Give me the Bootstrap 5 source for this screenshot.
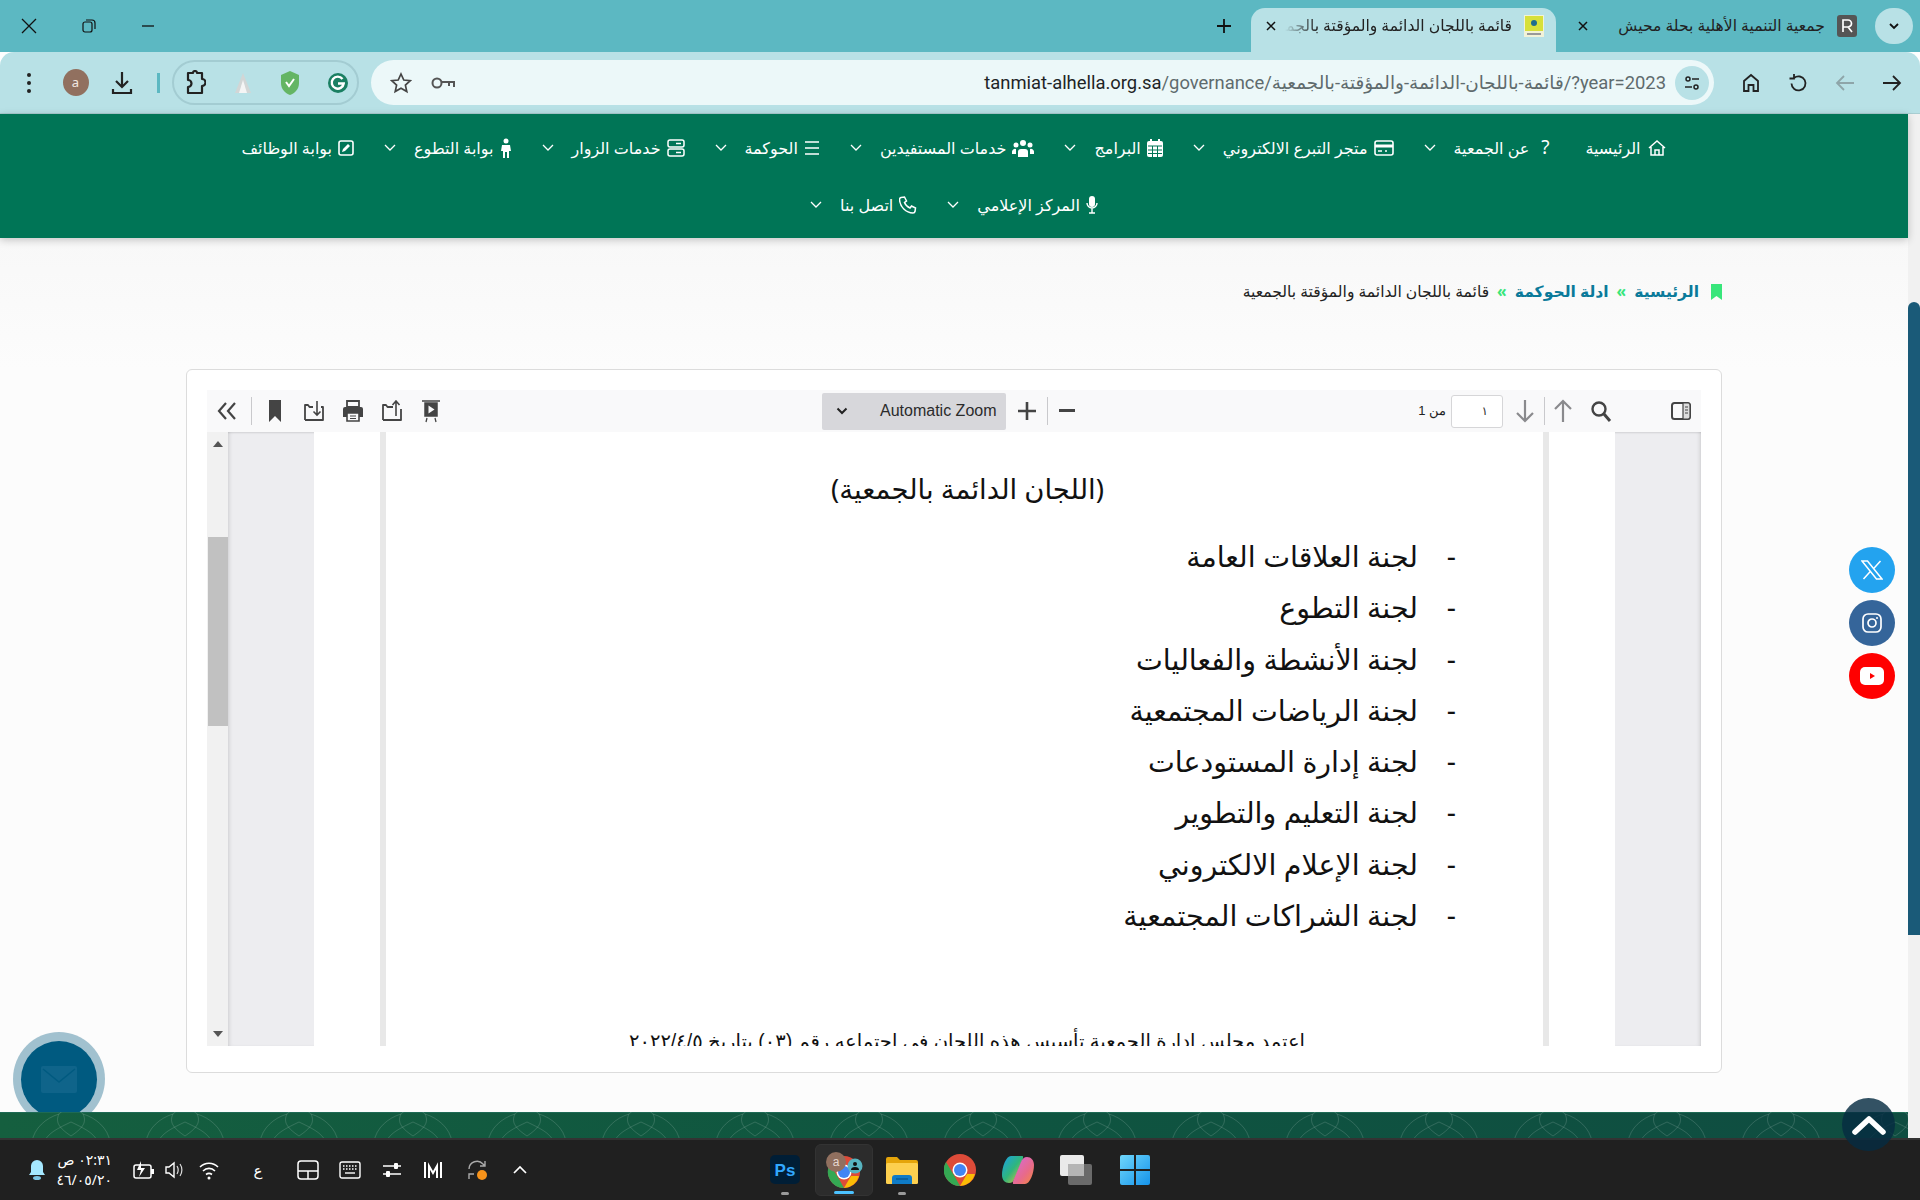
<!DOCTYPE html>
<html lang="ar" dir="rtl">
<head>
<meta charset="utf-8">
<title>قائمة باللجان الدائمة والمؤقتة بالجمعية</title>
<link href="https://cdn.jsdelivr.net/npm/bootstrap@5.3.0/dist/css/bootstrap.min.css" rel="stylesheet">
<style>
html,body{height:1200px;overflow:hidden;margin:0}
body{font-family:"Noto Sans","DejaVu Sans",sans-serif;background:#fff;color:#222}
svg{display:block;flex:none}
.strip{height:52px;background:#5cb8c2;padding:8px 7px 0 0}
.tab-menu{width:38px;height:36px;border-radius:18px;background:#b8e1e6}
.chrome-tab{height:44px;width:309px;padding:0 18px 8px 11px;font-size:15.6px;color:#222;white-space:nowrap}
.tab-live{width:305px;margin-right:10px;padding:0 12px 8px 14px;background:#b8e1e6;border-radius:14px 14px 0 0}
.tab-label{flex:1;overflow:hidden;padding:0 12px}
.tab-fade{padding-left:0;-webkit-mask-image:linear-gradient(to right,transparent 8px,#000 40px);mask-image:linear-gradient(to right,transparent 8px,#000 40px)}
.newtab{height:44px;width:24px;margin:0 15px 0 0;padding-bottom:8px}
.wincontrols{gap:45px;padding-left:21px;padding-bottom:8px;height:44px}
.toolbar-main{height:62px;background:#b8e1e6;border-bottom:1px solid #a9ced2;border-radius:14px 14px 0 0;padding:8px 5px 8px 0}
.tool-b{width:47px;height:45px}
.urlbar{width:1343px;height:45px;background:#ecf8f9;border-radius:23px;margin:0 13px 0 0;padding:0 5px 0 0}
.tune{width:34px;height:34px;border-radius:50%;background:#b8e1e6}
.urltext{flex:1;padding:0 9px;font-size:18.4px;color:#5f6b6d;font-family:"Roboto","DejaVu Sans",sans-serif;white-space:nowrap;text-align:right}
.urltext b{font-weight:400;color:#1e2426}
.ic-key{margin:0 0 0 19px}
.ic-star{margin:0 0 0 19px}
.extpill{width:187px;height:45px;border:2px solid #a3ccd2;border-radius:23px;margin-right:12px;padding:0 8px}
.tbar-sep{width:3px;height:20px;background:#5cb8c2;margin:0 12px 0 20px}
.avatar-box{margin-right:8px}
.avatar{width:26px;height:27px;border-radius:50%;background:#91705f;color:#f3e9e3;font-size:13px}
.menu-dots{margin-right:21px}
.menu-dot{width:4px;height:4px;border-radius:50%;background:#222}
.site-wrap{height:1024px}
.page-track{width:12px;background:#f1f1f1;position:relative}
.page-thumb{position:absolute;top:188px;left:0;right:0;height:633px;background:#1a5a78;border-radius:6px 6px 0 0}
.site{flex:1;background:#fcfcfc;position:relative;min-width:0}
.mainbar{height:124px;background:#007556;box-shadow:0 2px 8px rgba(0,0,0,.22);position:relative;z-index:2;padding:0 165px}
.mainbar .nav-link{color:#fff;padding:0 15px;height:57px;font-size:16px;gap:6px;white-space:nowrap}
.mainbar .nav{padding:5px 0 0}
.chev{margin-right:12px}
.crumbs{height:131px;padding:42px 186px 0 0;font-size:15.6px;background:linear-gradient(#f8f8f8,#fcfcfc)}
.crumb-mark{margin:4px 0 0 12px}
.crumbs a{color:#0b7a9a;font-weight:700;text-decoration:none}
.crumbs .sp{color:#38e67b;font-weight:700;margin:0 8px}
.pdfcard{margin:0 186px;height:704px;padding:20px;border:1px solid #dcdcdc;border-radius:6px;background:#fff}
.pdfbar{height:42px;background:#f9f9fa;padding:0 1px 0 7px}
.pdfside{flex:1}
.pbtn{width:39px;height:42px;color:#3d3d40}
.pbtn-s{width:26px}
.pbtn-up{width:36px}
.pbtn-dn{width:38px}
.psep{width:1px;height:28px;background:#c9c9cc}
.psep-tail{margin:0 3px 0 11px}
.pageinput{width:52px;height:33px;background:#fff;border:1px solid #d6d6d8;border-radius:3px;font-size:12px;padding:0 14px;line-height:30px;color:#333;margin:0 3px 0 5px}
.of{font-size:13px;font-family:"Liberation Sans",sans-serif;color:#222}
.zoomgroup{margin-right:6px}
.zoomsel{width:184px;height:37px;background:#d7d7db;border-radius:2px;margin-right:2px;padding:0 9px 0 14px;font-family:"Liberation Sans",sans-serif;font-size:16px;color:#2b2b2b}
.pdfbody{height:614px;background:#ededf0;overflow:hidden;box-shadow:inset 0 2px 3px -2px rgba(0,0,0,.2)}
.pad-r{width:86px;box-shadow:inset -3px 0 5px -3px rgba(0,0,0,.2)}
.pad-l{width:86px;box-shadow:inset 3px 0 5px -3px rgba(0,0,0,.2)}
.sheet{flex:1;background:#fff;padding:0 66px;overflow:hidden}
.sheet-in{height:100%;border-left:6px solid #e8e8e8;border-right:6px solid #e8e8e8;overflow:hidden;color:#111}
.pdfscroll{width:21px;background:#f1f1f1;position:relative}
.pdfthumb{position:absolute;top:105px;left:1px;right:0;height:189px;background:#c1c1c1}
.sc-up,.sc-down{position:absolute;left:6px;width:0;height:0;border-left:5px solid transparent;border-right:5px solid transparent}
.sc-up{top:9px;border-bottom:6px solid #555}
.sc-down{bottom:9px;border-top:6px solid #555}
.ttl{font-size:27.5px;text-align:center;margin:42px 0 0;line-height:30px;padding-left:6px}
.org{list-style:none;margin:27px 0 0;padding:0 87px 0 0}
.org li{height:51.3px;line-height:51.3px;font-size:28.5px;display:flex;gap:30px;white-space:nowrap}
.org li span{width:8px;text-align:center}
.cutline{margin:88px 0 0;font:400 19.5px/24px "Liberation Sans","DejaVu Sans",sans-serif;text-align:center;padding-left:5px;white-space:nowrap;color:#111}
.sitefoot{position:absolute;left:0;right:0;bottom:0;height:26px;overflow:hidden;background:linear-gradient(to left,#0f4d41,#0f5540 50%,#155f3f);box-shadow:inset 0 1px 0 #1e6a55}
.bubble{position:absolute;border-radius:50%}
.soc{right:13px;width:46px;height:46px}
.soc-x{top:433px;background:#23a3ef}
.soc-ig{top:486px;background:#35659a}
.soc-yt{top:539px;background:#f00}
.contact{left:13px;top:918px;width:92px;height:94px;background:rgba(0,90,128,.36)}
.contact-in{width:76px;height:77px;background:#005a80;border-radius:50%}
.totop{left:1842px;top:984px;width:53px;height:53px;background:rgba(6,44,66,.82)}
.taskbar{height:62px;background:#202020;border-top:2px solid #333;display:grid;grid-template-columns:1fr auto 1fr;color:#fff;direction:ltr}
.tray{padding-left:27px;height:60px}
.clock{width:65px;font-size:14px;line-height:20px;text-align:right;direction:rtl}
.tm-bat{margin-left:21px}.tm-vol{margin-left:10px}.tm-wifi{margin-left:14px}
.tm-lang{margin-left:29px;font-size:15px;width:20px;text-align:center}
.tm-pad{margin-left:29px}.tm-kb{margin-left:20px}.tm-sl{margin-left:21px}.tm-m{margin-left:21px}.tm-sync{margin-left:22px}.tm-up{margin-left:24px}
.app{width:58.2px;height:52px;position:relative}
.app-on{background:#2c2c2c;border-radius:6px;border:1px solid #333}
.dot{position:absolute;bottom:1px;left:50%;width:8px;height:3px;margin-left:-4px;background:#9a9a9a;border-radius:2px}
.dot-on{width:20px;margin-left:-10px;background:#4cc2ff}
</style>
</head>
<body class="d-flex flex-column">

<div class="strip d-flex align-items-start">
  <div class="tab-menu d-flex align-items-center justify-content-center">
    <svg width="14" height="14" viewBox="0 0 14 14"><path d="M3 5l4 4 4-4" fill="none" stroke="#111" stroke-width="1.8"/></svg>
  </div>
  <div class="chrome-tab d-flex align-items-center">
    <svg width="20" height="22" viewBox="0 0 20 22"><rect width="20" height="22" rx="3" fill="#555"/><path d="M6 17V5h5a3.500 3.500 0 0 1 0 7H6m5 0l4 5" fill="none" stroke="#fff" stroke-width="1.7"/></svg>
    <div class="tab-label">جمعية التنمية الأهلية بحلة محيش</div>
    <svg width="12" height="12" viewBox="0 0 12 12"><path d="M2 2l8 8M10 2l-8 8" stroke="#111" stroke-width="1.5"/></svg>
  </div>
  <div class="chrome-tab tab-live d-flex align-items-center">
    <svg width="20" height="22" viewBox="0 0 20 22"><rect width="20" height="22" fill="#f2f2d8"/><rect x="1" y="1" width="18" height="15" fill="#d7e03a"/><circle cx="10" cy="8" r="3" fill="#1f6c8e"/><rect x="3" y="18" width="14" height="2" fill="#999"/></svg>
    <div class="tab-label tab-fade">قائمة باللجان الدائمة والمؤقتة بالجمعية</div>
    <svg width="12" height="12" viewBox="0 0 12 12"><path d="M2 2l8 8M10 2l-8 8" stroke="#111" stroke-width="1.5"/></svg>
  </div>
  <div class="newtab d-flex align-items-center justify-content-center">
    <svg width="14" height="14" viewBox="0 0 14 14"><path d="M7 0v14M0 7h14" stroke="#111" stroke-width="1.8"/></svg>
  </div>
  <div class="flex-grow-1"></div>
  <div class="wincontrols d-flex align-items-center">
    <svg width="14" height="14" viewBox="0 0 14 14"><path d="M1 7h12" stroke="#111" stroke-width="1.3"/></svg>
    <svg width="14" height="14" viewBox="0 0 14 14"><rect x="1" y="3" width="9" height="10" rx="2" fill="none" stroke="#111" stroke-width="1.2"/><path d="M4 1h6a3 3 0 0 1 3 3v6" fill="none" stroke="#111" stroke-width="1.2"/></svg>
    <svg width="16" height="16" viewBox="0 0 16 16"><path d="M1 1l14 14M15 1L1 15" stroke="#111" stroke-width="1.3"/></svg>
  </div>
</div>

<div class="toolbar-main d-flex align-items-center">
  <div class="tool-b d-flex align-items-center justify-content-center"><svg width="22" height="22" viewBox="0 0 22 22"><path d="M2 11h17M12 4l7 7-7 7" fill="none" stroke="#222" stroke-width="1.8"/></svg></div>
  <div class="tool-b d-flex align-items-center justify-content-center"><svg width="22" height="22" viewBox="0 0 22 22"><path d="M20 11H3M10 4l-7 7 7 7" fill="none" stroke="#8ea5a9" stroke-width="1.8"/></svg></div>
  <div class="tool-b d-flex align-items-center justify-content-center"><svg width="20" height="20" viewBox="0 0 20 20"><path d="M6 5a7 7 0 1 1-2.500 5.500M6 1v4.500H1.500" fill="none" stroke="#222" stroke-width="1.8"/></svg></div>
  <div class="tool-b d-flex align-items-center justify-content-center"><svg width="20" height="20" viewBox="0 0 20 20"><path d="M3 18V8l7-6 7 6v10h-4.500v-6h-5v6z" fill="none" stroke="#222" stroke-width="1.8"/></svg></div>
  <div class="urlbar d-flex align-items-center">
    <div class="tune d-flex align-items-center justify-content-center"><svg width="18" height="18" viewBox="0 0 18 18"><circle cx="5" cy="5" r="2" fill="none" stroke="#222" stroke-width="1.500"/><path d="M9 5h7M2 13h7" stroke="#222" stroke-width="1.500"/><circle cx="13" cy="13" r="2" fill="none" stroke="#222" stroke-width="1.500"/></svg></div>
    <div class="urltext" dir="ltr"><b>tanmiat-alhella.org.sa</b>/governance/قائمة-باللجان-الدائمة-والمؤقتة-بالجمعية/?year=2023</div>
    <svg class="ic-key" width="24" height="14" viewBox="0 0 24 14"><circle cx="6" cy="7" r="4.500" fill="none" stroke="#555" stroke-width="2"/><path d="M11 6h12v5M18 6v4" fill="none" stroke="#555" stroke-width="2"/></svg>
    <svg class="ic-star" width="22" height="22" viewBox="0 0 22 22"><path d="M11 2l2.800 6 6.500.700-4.900 4.400 1.400 6.400-5.800-3.300-5.800 3.300 1.400-6.400-4.900-4.400 6.500-.700z" fill="none" stroke="#444" stroke-width="1.700"/></svg>
  </div>
  <div class="extpill d-flex align-items-center justify-content-between">
    <svg width="22" height="24" viewBox="0 0 22 24"><circle cx="11" cy="12" r="10" fill="#1a7f62"/><path d="M15.500 8a6 6 0 1 0 1.200 4.500H11" fill="none" stroke="#fff" stroke-width="2.400"/></svg>
    <svg width="22" height="26" viewBox="0 0 22 26"><path d="M11 1l9 4v8c0 6-4 10-9 12-5-2-9-6-9-12V5z" fill="#64b564"/><path d="M7 12l3 4 5-7" fill="none" stroke="#fff" stroke-width="2"/></svg>
    <svg width="22" height="24" viewBox="0 0 22 24"><path d="M11 2L3 22h16z" fill="#d2d6d6"/><path d="M11 9l-4 13h8z" fill="#f5f5f5"/></svg>
    <svg width="24" height="26" viewBox="0 0 24 26"><path d="M6 3h5a2 2 0 0 1 4 0h5v6a3 3 0 0 1 0 7v7H6v-6a3 3 0 0 0 0-7z" fill="none" stroke="#222" stroke-width="2.200" stroke-linejoin="round"/></svg>
  </div>
  <div class="tbar-sep"></div>
  <div class="tool-b d-flex align-items-center justify-content-center" style="width:30px"><svg width="24" height="26" viewBox="0 0 24 26"><path d="M12 2v14M6 11l6 6 6-6M3 19v4h18v-4" fill="none" stroke="#222" stroke-width="2.200"/></svg></div>
  <div class="tool-b avatar-box d-flex align-items-center justify-content-center"><div class="avatar d-flex align-items-center justify-content-center">a</div></div>
  <div class="menu-dots d-flex flex-column gap-1"><span class="menu-dot"></span><span class="menu-dot"></span><span class="menu-dot"></span></div>
</div>

<div class="site-wrap d-flex">
  <div class="page-track"><div class="page-thumb"></div></div>
  <div class="site">
    <nav class="mainbar">
      <ul class="nav justify-content-center">
        <li class="nav-item"><a class="nav-link d-flex align-items-center" href="#"><svg width="20" height="20" viewBox="0 0 20 20"><path d="M2 10l8-7 8 7M4 9v8h12V9M8 17v-5h4v5" fill="none" stroke="#fff" stroke-width="1.500"/></svg>الرئيسية</a></li>
        <li class="nav-item"><a class="nav-link d-flex align-items-center" href="#"><span style="font-size:19px;width:20px;text-align:center">?</span>عن الجمعية<svg class="chev" width="12" height="12" viewBox="0 0 12 12"><path d="M1 3l5 5 5-5" fill="none" stroke="#fff" stroke-width="1.300"/></svg></a></li>
        <li class="nav-item"><a class="nav-link d-flex align-items-center" href="#"><svg width="20" height="16" viewBox="0 0 20 16"><rect x="1" y="1" width="18" height="14" rx="2" fill="none" stroke="#fff" stroke-width="1.600"/><path d="M1 6h18" stroke="#fff" stroke-width="3"/><path d="M4 11h4M11 11h2" stroke="#fff" stroke-width="1.600"/></svg>متجر التبرع الالكتروني<svg class="chev" width="12" height="12" viewBox="0 0 12 12"><path d="M1 3l5 5 5-5" fill="none" stroke="#fff" stroke-width="1.300"/></svg></a></li>
        <li class="nav-item"><a class="nav-link d-flex align-items-center" href="#"><svg width="16" height="18" viewBox="0 0 16 18"><rect x="0" y="2" width="16" height="16" rx="2" fill="#fff"/><path d="M4 0v4M12 0v4" stroke="#fff" stroke-width="2"/><path d="M1 7h14M1 11h14M1 14.500h14M5.500 7v11M10.500 7v11" stroke="#007556"/></svg>البرامج<svg class="chev" width="12" height="12" viewBox="0 0 12 12"><path d="M1 3l5 5 5-5" fill="none" stroke="#fff" stroke-width="1.300"/></svg></a></li>
        <li class="nav-item"><a class="nav-link d-flex align-items-center" href="#"><svg width="22" height="18" viewBox="0 0 22 18"><circle cx="11" cy="4" r="3" fill="#fff"/><circle cx="4" cy="6" r="2.500" fill="#fff"/><circle cx="18" cy="6" r="2.500" fill="#fff"/><path d="M6 18v-5a3 3 0 0 1 3-3h4a3 3 0 0 1 3 3v5z" fill="#fff"/><path d="M0 15v-2a3 3 0 0 1 4-3v5zM22 15v-2a3 3 0 0 0-4-3v5z" fill="#fff"/></svg>خدمات المستفيدين<svg class="chev" width="12" height="12" viewBox="0 0 12 12"><path d="M1 3l5 5 5-5" fill="none" stroke="#fff" stroke-width="1.300"/></svg></a></li>
        <li class="nav-item"><a class="nav-link d-flex align-items-center" href="#"><svg width="16" height="14" viewBox="0 0 16 14"><path d="M1 1h14M1 7h14M1 13h14" stroke="#fff" stroke-width="1.500"/></svg>الحوكمة<svg class="chev" width="12" height="12" viewBox="0 0 12 12"><path d="M1 3l5 5 5-5" fill="none" stroke="#fff" stroke-width="1.300"/></svg></a></li>
        <li class="nav-item"><a class="nav-link d-flex align-items-center" href="#"><svg width="18" height="18" viewBox="0 0 18 18"><rect x="1" y="1" width="16" height="7" rx="2" fill="none" stroke="#fff" stroke-width="1.500"/><rect x="1" y="10" width="16" height="7" rx="2" fill="none" stroke="#fff" stroke-width="1.500"/><path d="M9 4.500h5M9 13.500h5" stroke="#fff" stroke-width="1.500"/></svg>خدمات الزوار<svg class="chev" width="12" height="12" viewBox="0 0 12 12"><path d="M1 3l5 5 5-5" fill="none" stroke="#fff" stroke-width="1.300"/></svg></a></li>
        <li class="nav-item"><a class="nav-link d-flex align-items-center" href="#"><svg width="12" height="20" viewBox="0 0 12 20"><circle cx="6" cy="3" r="2.500" fill="#fff"/><path d="M2 7h8l1 6H9v7H7v-6H5v6H3v-7H1z" fill="#fff"/></svg>بوابة التطوع<svg class="chev" width="12" height="12" viewBox="0 0 12 12"><path d="M1 3l5 5 5-5" fill="none" stroke="#fff" stroke-width="1.300"/></svg></a></li>
        <li class="nav-item"><a class="nav-link d-flex align-items-center" href="#"><svg width="16" height="16" viewBox="0 0 16 16"><rect x="1" y="1" width="14" height="14" rx="2" fill="none" stroke="#fff" stroke-width="1.600"/><path d="M4 12l1-3 5-5 2 2-5 5z" fill="#fff"/></svg>بوابة الوظائف</a></li>
        <li class="nav-item"><a class="nav-link d-flex align-items-center" href="#"><svg width="12" height="20" viewBox="0 0 12 20"><rect x="3" y="1" width="6" height="11" rx="3" fill="#fff"/><path d="M1 8a5 5 0 0 0 10 0M6 13v5M3 18h6" fill="none" stroke="#fff" stroke-width="1.400"/></svg>المركز الإعلامي<svg class="chev" width="12" height="12" viewBox="0 0 12 12"><path d="M1 3l5 5 5-5" fill="none" stroke="#fff" stroke-width="1.300"/></svg></a></li>
        <li class="nav-item"><a class="nav-link d-flex align-items-center" href="#"><svg width="18" height="18" viewBox="0 0 18 18"><path d="M2 1.500l3.500-.5 2 4-2 1.500c1 2.500 3 4.500 5.500 5.500l1.500-2 4 2-.5 3.500c-.2 1-1 1.500-2 1.500C7 17 1 11 .5 3.500c0-1 .5-1.800 1.500-2z" fill="none" stroke="#fff" stroke-width="1.500"/></svg>اتصل بنا<svg class="chev" width="12" height="12" viewBox="0 0 12 12"><path d="M1 3l5 5 5-5" fill="none" stroke="#fff" stroke-width="1.300"/></svg></a></li>
      </ul>
    </nav>

    <div class="crumbs d-flex align-items-start">
      <svg class="crumb-mark" width="11" height="16" viewBox="0 0 11 16"><path d="M0 0h11v16l-5.500-4L0 16z" fill="#38e67b"/></svg>
      <a href="#">الرئيسية</a><span class="sp">»</span><a href="#">ادلة الحوكمة</a><span class="sp">»</span><span>قائمة باللجان الدائمة والمؤقتة بالجمعية</span>
    </div>

    <div class="pdfcard">
      <div class="pdfbar d-flex align-items-center">
        <div class="pdfside d-flex align-items-center">
          <div class="pbtn d-flex align-items-center justify-content-center"><svg width="20" height="20" viewBox="0 0 20 20"><rect x="1" y="2" width="18" height="16" rx="2.500" fill="none" stroke="#444" stroke-width="2"/><path d="M12 2h5a2 2 0 0 1 2 2v12a2 2 0 0 1-2 2h-5zM14 6h3M14 9h3M14 12h3" fill="#ddd" stroke="#444" stroke-width="1.200"/></svg></div>
          <div style="width:41px"></div>
          <div class="pbtn d-flex align-items-center justify-content-center"><svg width="22" height="22" viewBox="0 0 22 22"><circle cx="9" cy="9" r="6.500" fill="none" stroke="#444" stroke-width="2.400"/><path d="M14 14l6 7" stroke="#444" stroke-width="3"/></svg></div>
          <div class="pbtn pbtn-up d-flex align-items-center justify-content-center"><svg width="20" height="24" viewBox="0 0 20 24"><path d="M10 23V2M2 10l8-8 8 8" fill="none" stroke="#8a8a8d" stroke-width="2.200"/></svg></div>
          <div class="psep"></div>
          <div class="pbtn pbtn-dn d-flex align-items-center justify-content-center"><svg width="20" height="24" viewBox="0 0 20 24"><path d="M10 1v21M2 14l8 8 8-8" fill="none" stroke="#8a8a8d" stroke-width="2.200"/></svg></div>
          <div class="pageinput">١</div>
          <div class="of">من 1</div>
        </div>
        <div class="zoomgroup d-flex align-items-center">
          <div class="pbtn d-flex align-items-center justify-content-center"><svg width="16" height="4" viewBox="0 0 16 4"><rect width="16" height="3" fill="#444"/></svg></div>
          <div class="psep"></div>
          <div class="pbtn d-flex align-items-center justify-content-center"><svg width="20" height="20" viewBox="0 0 20 20"><path d="M10 1v18M1 10h18" stroke="#444" stroke-width="2.600"/></svg></div>
          <div class="zoomsel d-flex align-items-center justify-content-between" dir="ltr">
            <svg width="12" height="10" viewBox="0 0 12 10"><path d="M1.500 2.500L6 7l4.500-4.500" fill="none" stroke="#222" stroke-width="2"/></svg>
            <span>Automatic Zoom</span>
          </div>
        </div>
        <div class="pdfside d-flex align-items-center justify-content-end">
          <div class="pbtn d-flex align-items-center justify-content-center"><svg width="20" height="24" viewBox="0 0 20 24"><path d="M1 2h18M4 4h12v13H4z" fill="#444" stroke="#444" stroke-width="1.500"/><path d="M7.500 6.500l6 4-6 4z" fill="#f9f9fa"/><path d="M6 19l-1 4M14 19l1 4" stroke="#444" stroke-width="1.300"/></svg></div>
          <div class="pbtn d-flex align-items-center justify-content-center"><svg width="20" height="22" viewBox="0 0 20 22"><path d="M1 20V5h3l1.500 2H11M19 9v11H1" fill="none" stroke="#444" stroke-width="1.800" stroke-linejoin="round"/><path d="M14 16V1M10.500 5L14 1l3.500 4" fill="none" stroke="#444" stroke-width="1.600"/></svg></div>
          <div class="pbtn d-flex align-items-center justify-content-center"><svg width="22" height="22" viewBox="0 0 22 22"><path d="M5 1h12v6H5z" fill="none" stroke="#444" stroke-width="1.800"/><path d="M1 9a2 2 0 0 1 2-2h16a2 2 0 0 1 2 2v8H1z" fill="#444"/><path d="M5 13h12v8H5z" fill="#f9f9fa" stroke="#444" stroke-width="1.600"/><path d="M8 16h6M8 18.500h6" stroke="#444"/></svg></div>
          <div class="pbtn d-flex align-items-center justify-content-center"><svg width="20" height="22" viewBox="0 0 20 22"><path d="M1 20V5h3l1.500 2H9M17 7h2v13H1" fill="none" stroke="#444" stroke-width="1.800" stroke-linejoin="round"/><path d="M13 1v14M9.500 11.500L13 15l3.500-3.500" fill="none" stroke="#444" stroke-width="1.600"/></svg></div>
          <div class="pbtn d-flex align-items-center justify-content-center"><svg width="14" height="22" viewBox="0 0 14 22"><path d="M1 0h12v22l-6-6-6 6z" fill="#444"/></svg></div>
          <div class="psep psep-tail"></div>
          <div class="pbtn pbtn-s d-flex align-items-center justify-content-center"><svg width="20" height="18" viewBox="0 0 20 18"><path d="M9 1L2 9l7 8M18 1l-7 8 7 8" fill="none" stroke="#444" stroke-width="2.200"/></svg></div>
        </div>
      </div>
      <div class="pdfbody d-flex">
        <div class="pad-r"></div>
        <div class="sheet">
          <div class="sheet-in">
            <p class="ttl">(اللجان الدائمة بالجمعية)</p>
            <ul class="org">
              <li><span>-</span>لجنة العلاقات العامة</li>
              <li><span>-</span>لجنة التطوع</li>
              <li><span>-</span>لجنة الأنشطة والفعاليات</li>
              <li><span>-</span>لجنة الرياضات المجتمعية</li>
              <li><span>-</span>لجنة إدارة المستودعات</li>
              <li><span>-</span>لجنة التعليم والتطوير</li>
              <li><span>-</span>لجنة الإعلام الالكتروني</li>
              <li><span>-</span>لجنة الشراكات المجتمعية</li>
            </ul>
            <p class="cutline">اعتمد مجلس إدارة الجمعية تأسيس هذه اللجان في اجتماعه رقم (٠٣) بتاريخ ٢٠٢٢/٤/٥</p>
          </div>
        </div>
        <div class="pad-l"></div>
        <div class="pdfscroll">
          <span class="sc-up"></span>
          <div class="pdfthumb"></div>
          <span class="sc-down"></span>
        </div>
      </div>
    </div>

    <div class="bubble soc soc-x d-flex align-items-center justify-content-center"><svg width="22" height="20" viewBox="0 0 22 20"><path d="M1 1h5.500L21 19h-5.500zM19.500 1L12.500 8.800M2.500 19l7-7.800" fill="none" stroke="#fff" stroke-width="1.500"/></svg></div>
    <div class="bubble soc soc-ig d-flex align-items-center justify-content-center"><svg width="20" height="20" viewBox="0 0 20 20"><rect x="1" y="1" width="18" height="18" rx="5" fill="none" stroke="#fff" stroke-width="1.700"/><circle cx="10" cy="10" r="4" fill="none" stroke="#fff" stroke-width="1.700"/><circle cx="15" cy="5" r="1" fill="#fff"/></svg></div>
    <div class="bubble soc soc-yt d-flex align-items-center justify-content-center"><svg width="24" height="18" viewBox="0 0 24 18"><rect width="24" height="18" rx="5" fill="#fff"/><path d="M10 6l5 3-5 3z" fill="#f00"/></svg></div>

    <div class="bubble contact d-flex align-items-center justify-content-center">
      <div class="contact-in d-flex align-items-center justify-content-center">
        <svg width="36" height="27" viewBox="0 0 36 27"><rect width="36" height="27" rx="2" fill="#0f648a"/><path d="M2 3l16 13L34 3" fill="none" stroke="#005a80" stroke-width="1.500"/></svg>
      </div>
    </div>

    <div class="sitefoot" aria-hidden="true">
      <svg width="1908" height="26">
        <defs><pattern id="arches" width="114" height="40" patternUnits="userSpaceOnUse" x="14" y="-4">
          <g fill="none" stroke="#fff" stroke-opacity=".14" stroke-width="1">
            <path d="M18 34c2-14 14-24 27-28M96 34c-2-14-14-24-27-28"/>
            <path d="M30 34c4-8 10-12 27-20 17 8 23 12 27 20"/>
            <path d="M45 6c-4 8 0 14 12 22 12-8 16-14 12-22 -4-4-8-6-12-8-4 2-8 4-12 8z"/>
          </g></pattern></defs>
        <rect width="1908" height="26" fill="url(#arches)"/>
      </svg>
    </div>

    <div class="bubble totop d-flex align-items-center justify-content-center">
      <svg width="34" height="22" viewBox="0 0 34 22"><path d="M3 18L17 5l14 13" fill="none" stroke="#fff" stroke-width="5.500" stroke-linecap="round" stroke-linejoin="round"/></svg>
    </div>
  </div>
</div>

<div class="taskbar">
  <div class="tray d-flex align-items-center">
    <svg width="20" height="22" viewBox="0 0 20 22"><path d="M10 1a6 6 0 0 1 6 6v6l2 3H2l2-3V7a6 6 0 0 1 6-6z" fill="#a5e8ff"/><ellipse cx="10" cy="19" rx="4" ry="2" fill="#7cc5e4"/></svg>
    <div class="clock"><div>٠٢:٣١ ص</div><div>٤٦/٠٥/٢٠</div></div>
    <svg class="tm-bat" width="22" height="20" viewBox="0 0 22 20"><rect x="1" y="5" width="17" height="13" rx="2" fill="none" stroke="#fff" stroke-width="1.500"/><rect x="18" y="9" width="3" height="5" fill="#fff"/><path d="M8 1L4 10h4l-2 7 6-9H8z" fill="#fff"/></svg>
    <svg class="tm-vol" width="20" height="20" viewBox="0 0 20 20"><path d="M1 7h3l5-4v14l-5-4H1z" fill="none" stroke="#fff" stroke-width="1.400"/><path d="M12 6c1.500 2.500 1.500 5.500 0 8M15 4c2.500 3.500 2.500 8.500 0 12" fill="none" stroke="#ddd" stroke-width="1.200"/></svg>
    <svg class="tm-wifi" width="20" height="20" viewBox="0 0 20 20"><path d="M1 7c5-5 13-5 18 0M4 11c3.500-3.500 8.500-3.500 12 0M7 14.500c2-1.500 4-1.500 6 0" fill="none" stroke="#fff" stroke-width="1.600"/><circle cx="10" cy="18" r="1.500" fill="#fff"/></svg>
    <span class="tm-lang">ع</span>
    <svg class="tm-pad" width="22" height="20" viewBox="0 0 22 20"><rect x="1" y="1" width="20" height="18" rx="3" fill="none" stroke="#fff" stroke-width="1.500"/><path d="M1 11h20M11 11v8" stroke="#fff" stroke-width="1.500"/></svg>
    <svg class="tm-kb" width="22" height="18" viewBox="0 0 22 18"><rect x="1" y="1" width="20" height="16" rx="2" fill="none" stroke="#fff" stroke-width="1.400"/><path d="M4 5h14M4 8h14" stroke="#fff" stroke-width="1.500" stroke-dasharray="1.500 1.500"/><path d="M6 12h10" stroke="#fff" stroke-width="1.400"/></svg>
    <svg class="tm-sl" width="20" height="18" viewBox="0 0 20 18"><path d="M1 5h11M16 5h3M1 13h3M8 13h11" stroke="#fff" stroke-width="1.600"/><rect x="12" y="2" width="4" height="6" rx="1" fill="#fff"/><rect x="4" y="10" width="4" height="6" rx="1" fill="#fff"/></svg>
    <svg class="tm-m" width="20" height="18" viewBox="0 0 20 18"><path d="M2 1v16M18 1v16M6 17V5l4 7 4-7v12" fill="none" stroke="#fff" stroke-width="2"/></svg>
    <svg class="tm-sync" width="24" height="24" viewBox="0 0 24 24"><path d="M4 11a8 8 0 0 1 14-5l2 2M20 3v5h-5M4 21v-5h5" fill="none" stroke="#aaa" stroke-width="1.400"/><circle cx="17" cy="17" r="5" fill="#f7931a"/></svg>
    <svg class="tm-up" width="14" height="10" viewBox="0 0 14 10"><path d="M1 8l6-6 6 6" fill="none" stroke="#fff" stroke-width="1.700"/></svg>
  </div>
  <div class="d-flex align-items-center">
    <div class="app d-flex align-items-center justify-content-center"><svg width="30" height="30" viewBox="0 0 30 30"><rect width="30" height="29" rx="5" fill="#001e36"/><text x="15" y="21" text-anchor="middle" font-family="Liberation Sans" font-size="17" font-weight="700" fill="#31a8ff">Ps</text></svg><span class="dot"></span></div>
    <div class="app app-on d-flex align-items-center justify-content-center"><svg width="38" height="36" viewBox="0 0 38 36"><g transform="translate(3 4)"><circle cx="16" cy="16" r="16" fill="#dd4b39"/><path d="M16 32a16 16 0 0 1-14-24l9 15z" fill="#34a853"/><path d="M16 32l7-12h8a16 16 0 0 1-15 12z" fill="#fbbc05"/><circle cx="16" cy="16" r="7.500" fill="#fff"/><circle cx="16" cy="16" r="6" fill="#4285f4"/></g><circle cx="11" cy="10" r="10" fill="#91705f"/><text x="11" y="14" text-anchor="middle" font-family="Liberation Sans" font-size="12" fill="#e6d8d0">a</text><circle cx="30" cy="14" r="7.500" fill="#57b4c0"/><circle cx="30" cy="12" r="2" fill="#111"/><path d="M26 18a4 3 0 0 1 8 0z" fill="#111"/></svg><span class="dot dot-on"></span></div>
    <div class="app d-flex align-items-center justify-content-center"><svg width="32" height="28" viewBox="0 0 32 28"><path d="M0 3a2 2 0 0 1 2-2h9l3 3h16a2 2 0 0 1 2 2v18H0z" fill="#e5a50a"/><rect y="7" width="32" height="21" rx="1.500" fill="#fdd04f"/><path d="M6 28v-6a3 3 0 0 1 3-3h14a3 3 0 0 1 3 3v6z" fill="#0f7bc6"/><path d="M10 23h12" stroke="#075a94" stroke-width="1.500"/></svg><span class="dot"></span></div>
    <div class="app d-flex align-items-center justify-content-center"><svg width="32" height="32" viewBox="0 0 32 32"><circle cx="16" cy="16" r="16" fill="#dd4b39"/><path d="M16 32A16 16 0 0 1 2 8l9 15z" fill="#34a853"/><path d="M16 32l7-12h8a16 16 0 0 1-15 12z" fill="#fbbc05"/><circle cx="16" cy="16" r="7.500" fill="#fff"/><circle cx="16" cy="16" r="6" fill="#4285f4"/></svg></div>
    <div class="app d-flex align-items-center justify-content-center"><svg width="32" height="30" viewBox="0 0 32 30"><defs><linearGradient id="cpa" x1="0" y1="0" x2="1" y2="1"><stop offset="0" stop-color="#1a9fe8"/><stop offset=".5" stop-color="#2fb67c"/><stop offset="1" stop-color="#f4c430"/></linearGradient><linearGradient id="cpb" x1="0" y1="0" x2="1" y2="1"><stop offset="0" stop-color="#d36ce0"/><stop offset=".6" stop-color="#e86a8a"/><stop offset="1" stop-color="#f58a3c"/></linearGradient></defs><path d="M9 1h11c2 0 1 3 0 5L13 23c-1 3-3 5-6 5-4 0-7-3-7-8C0 12 4 1 9 1z" fill="url(#cpa)"/><path d="M23 29H12c-2 0-1-3 0-5l7-17c1-3 3-5 6-5 4 0 7 3 7 8 0 8-4 19-9 19z" fill="url(#cpb)"/></svg></div>
    <div class="app d-flex align-items-center justify-content-center"><svg width="32" height="30" viewBox="0 0 32 30"><rect x="8" y="9" width="24" height="21" rx="2" fill="#6a6a6a"/><rect width="24" height="21" rx="2" fill="#eaeaea"/><rect x="8" y="9" width="16" height="12" fill="#b5b5b5"/></svg></div>
    <div class="app d-flex align-items-center justify-content-center"><svg width="30" height="30" viewBox="0 0 30 30"><defs><linearGradient id="wn" x1="0" y1="0" x2="1" y2="1"><stop offset="0" stop-color="#6fd7fb"/><stop offset="1" stop-color="#1593ea"/></linearGradient></defs><path d="M0 2a2 2 0 0 1 2-2h12v14H0zM16 0h12a2 2 0 0 1 2 2v12H16zM0 16h14v14H2a2 2 0 0 1-2-2zM16 16h14v12a2 2 0 0 1-2 2H16z" fill="url(#wn)"/></svg></div>
  </div>
  <div></div>
</div>
</body>
</html>
